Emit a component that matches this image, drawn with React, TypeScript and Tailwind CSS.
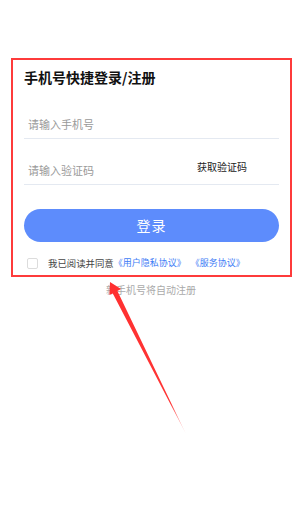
const font = { fontFamily: '"Noto Sans CJK SC", "Noto Sans", sans-serif' }

const Arrow = () => (
  <svg className="absolute left-0 top-0 pointer-events-none" width="300" height="524" viewBox="0 0 300 524">
    <defs>
      <linearGradient id="fade" x1="110" y1="282" x2="186" y2="434" gradientUnits="userSpaceOnUse">
        <stop offset="0" stopColor="#ff3030" />
        <stop offset="0.8" stopColor="#ff3535" />
        <stop offset="1" stopColor="#ff3535" stopOpacity="0.1" />
      </linearGradient>
    </defs>
    <polygon
      points="110,282 121,289 117.4,291 186,434 112.8,293.4 109.4,295"
      fill="url(#fade)"
    />
  </svg>
)

export default function App() {
  return (
    <div className="relative w-[300px] h-[524px] bg-white overflow-hidden" style={font}>
      <div className="ml-[11px] mr-[8px] mt-[58px] h-[219px] border-2 border-[#fe3b3b] px-[11px]">
        <div className="pt-[7px] text-[14px] leading-[20px] font-bold text-[#111]">手机号快捷登录/注册</div>

        <div className="h-[52px] flex items-end pb-[6px] border-b border-[#e4e9f1]">
          <span className="text-[11px] leading-[16px] text-[#9a9a9a] pl-[4px]">请输入手机号</span>
        </div>

        <div className="h-[46px] flex items-end justify-between pb-[6px] border-b border-[#e4e9f1]">
          <span className="text-[11px] leading-[16px] text-[#9a9a9a] pl-[4px]">请输入验证码</span>
          <span className="text-[10px] leading-[16px] text-[#222] pr-[32px] mb-[3px]">获取验证码</span>
        </div>

        <button className="mt-[24px] w-full h-[33px] rounded-full bg-[#5d8cfc] text-white text-[14px] tracking-[1px]">
          登录
        </button>

        <div className="mt-[14px] flex items-center text-[9.4px] leading-[14px]">
          <span className="ml-[3px] w-[11px] h-[11px] rounded-[2px] border border-[#dcdcdc] bg-white"></span>
          <span className="ml-[10px] text-[#444]">我已阅读并同意</span>
          <span className="text-[9px] text-[#3e7cf6]">《用户隐私协议》</span>
          <span className="ml-[5px] text-[9px] text-[#3e7cf6]">《服务协议》</span>
        </div>
      </div>

      <div className="mt-[6px] text-center text-[10px] leading-[14px] text-[#aaaaaa] pl-[2px]">新手机号将自动注册</div>

      <Arrow />
    </div>
  )
}
